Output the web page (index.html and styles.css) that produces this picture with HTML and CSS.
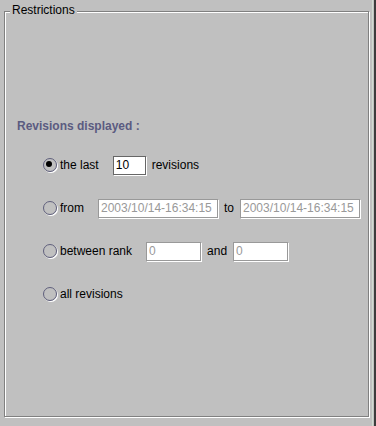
FILE: index.html
```html
<!DOCTYPE html>
<html lang="en">

<head>
    <meta charset="UTF-8">
    <meta name="viewport" content="width=device-width, initial-scale=1.0">
    <title>Restrictions</title>
    <link rel="stylesheet" href="styles.css">
</head>

<body>
    <div class="main">
        <div class="group">
            <span class="groupTitle">Restrictions</span>
            <div class="heading">Revisions displayed :</div>
            <div class="options">
                <div class="row">
                    <span class="radio checked"></span>
                    <span class="label">the last</span>
                    <input class="field small active" type="text" value="10">
                    <span class="sep">revisions</span>
                </div>
                <div class="row">
                    <span class="radio"></span>
                    <span class="label">from</span>
                    <input class="field date" type="text" value="2003/10/14-16:34:15" disabled>
                    <span class="sep">to</span>
                    <input class="field date" type="text" value="2003/10/14-16:34:15" disabled>
                </div>
                <div class="row">
                    <span class="radio"></span>
                    <span class="label">between rank</span>
                    <input class="field rank" type="text" value="0" disabled>
                    <span class="sep">and</span>
                    <input class="field rank" type="text" value="0" disabled>
                </div>
                <div class="row">
                    <span class="radio"></span>
                    <span class="label">all revisions</span>
                </div>
            </div>
        </div>
    </div>
    <div class="edge"></div>
</body>

</html>
```

FILE: styles.css
```css
* {
    margin: 0;
    padding: 0;
    box-sizing: border-box;
}

body {
    display: flex;
    width: 376px;
    height: 426px;
    background-color: #c0c0c0;
    font-family: "Liberation Sans", Arial, sans-serif;
    font-size: 12px;
    color: #000;
    overflow: hidden;
}

.main {
    width: 372px;
    padding: 11px 0 0 4px;
}

/* etched border like the swing TitledBorder */
.group {
    position: relative;
    width: 365px;
    height: 406px;
    border: 1px solid #808080;
    box-shadow: inset 1px 1px 0 #fff, 1px 1px 0 #fff;
    padding: 107px 0 0 12px;
}

.groupTitle {
    position: absolute;
    top: -9px;
    left: 5px;
    padding: 0 2px 0 2px;
    background-color: #c0c0c0;
    font-size: 12px;
    line-height: 15px;
}

.heading {
    font-weight: bold;
    color: #5b5b80;
    line-height: 14px;
}

.options {
    display: flex;
    flex-direction: column;
    gap: 23px;
    margin: 22px 0 0 26px;
}

.row {
    display: flex;
    align-items: center;
    height: 20px;
}

.radio {
    position: relative;
    width: 13px;
    height: 14px;
    margin-right: 4px;
}

.radio::before,
.radio::after {
    content: "";
    position: absolute;
    border-radius: 50%;
}

.radio::before {
    left: 0;
    top: 0;
    width: 12px;
    height: 12px;
    border: 1px solid #5f5f7c;
    box-shadow: 1px 1px 0 #fff;
}

.radio.checked::after {
    left: 3px;
    top: 3px;
    width: 6px;
    height: 6px;
    background-color: #000;
}

.label {
    margin-right: 14px;
    line-height: 14px;
}

.sep {
    margin: 0 6px;
    line-height: 14px;
}

.field {
    height: 19px;
    border: 1px solid #999;
    box-shadow: 1px 1px 0 #fff;
    background-color: #fff;
    padding: 0 0 0 2px;
    font-family: "Liberation Sans", Arial, sans-serif;
    font-size: 12px;
    color: #999;
    outline: none;
}

.field.active {
    border-color: #666;
    color: #000;
}

.small {
    width: 33px;
}

.date {
    width: 120px;
}

.rank {
    width: 55px;
}

.edge {
    width: 4px;
    height: 426px;
    border-left: 1px solid #d0dcd0;
    border-right: 2px solid #3c3c3c;
}
```
